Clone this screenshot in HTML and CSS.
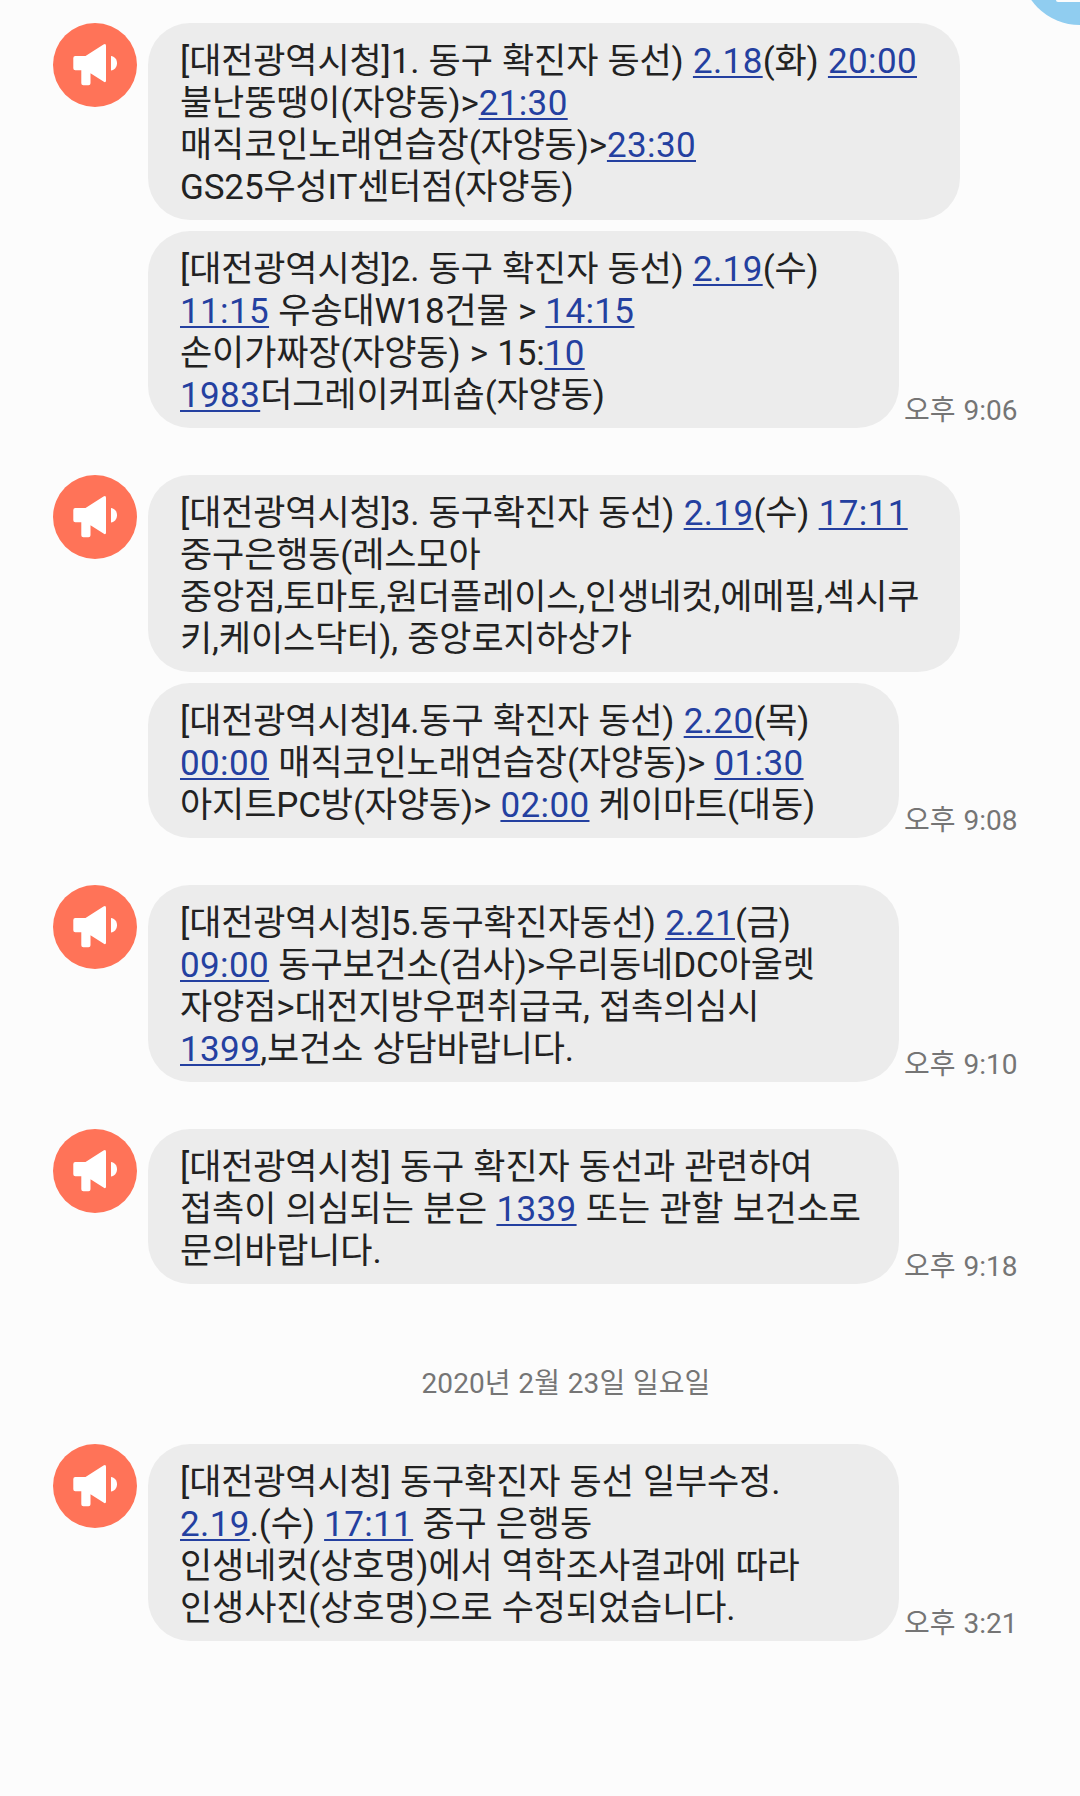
FILE: index.html
```
<!DOCTYPE html>
<html lang="ko">
<head>
    <meta charset="utf-8">
    <title>메시지</title>
    <link rel="stylesheet" href="styles.css">
</head>
<body>
<svg class="symbols" width="0" height="0">
    <symbol id="megaphone" viewBox="0 0 84 84">
        <path d="M20.300 35Q20.300 33 22.300 33H32.500L50.500 21.600Q53 20.200 53 22.800V57.500Q53 60.200 50.500 58.600L37.500 50.300V60.300Q37.500 62.300 35.500 62.300H30.300Q28.300 62.300 28.300 60.300V47.300H22.300Q20.300 47.300 20.300 45.300Z"/>
        <path d="M58 33C61.500 33.300 64 36.500 64 40.200S61.500 47.200 58 47.500Z"/>
    </symbol>
</svg>

<div class="corner_badge"><span></span><i></i></div>

<div class="chat">
    <div class="group">
        <div class="avatar"><svg><use href="#megaphone"/></svg></div>
        <div class="messages">
            <div class="row">
                <div class="bubble wide">[대전광역시청]1. 동구 확진자 동선) <a>2.18</a>(화) <a>20:00</a><br>불난뚱땡이(자양동)&gt;<a>21:30</a><br>매직코인노래연습장(자양동)&gt;<a>23:30</a><br>GS25우성IT센터점(자양동)</div>
            </div>
            <div class="row">
                <div class="bubble">[대전광역시청]2. 동구 확진자 동선) <a>2.19</a>(수)<br><a>11:15</a> 우송대W18건물 &gt; <a>14:15</a><br>손이가짜장(자양동) &gt; 15:<a>10</a><br><a>1983</a>더그레이커피숍(자양동)</div>
                <span class="time">오후 9:06</span>
            </div>
        </div>
    </div>

    <div class="group">
        <div class="avatar"><svg><use href="#megaphone"/></svg></div>
        <div class="messages">
            <div class="row">
                <div class="bubble wide">[대전광역시청]3. 동구확진자 동선) <a>2.19</a>(수) <a>17:11</a><br>중구은행동(레스모아<br>중앙점,토마토,원더플레이스,인생네컷,에메필,섹시쿠<br>키,케이스닥터), 중앙로지하상가</div>
            </div>
            <div class="row">
                <div class="bubble">[대전광역시청]4.동구 확진자 동선) <a>2.20</a>(목)<br><a>00:00</a> 매직코인노래연습장(자양동)&gt; <a>01:30</a><br>아지트PC방(자양동)&gt; <a>02:00</a> 케이마트(대동)</div>
                <span class="time">오후 9:08</span>
            </div>
        </div>
    </div>

    <div class="group">
        <div class="avatar"><svg><use href="#megaphone"/></svg></div>
        <div class="messages">
            <div class="row">
                <div class="bubble">[대전광역시청]5.동구확진자동선) <a>2.21</a>(금)<br><a>09:00</a> 동구보건소(검사)&gt;우리동네DC아울렛<br>자양점&gt;대전지방우편취급국, 접촉의심시<br><a>1399</a>,보건소 상담바랍니다.</div>
                <span class="time">오후 9:10</span>
            </div>
        </div>
    </div>

    <div class="group">
        <div class="avatar"><svg><use href="#megaphone"/></svg></div>
        <div class="messages">
            <div class="row">
                <div class="bubble">[대전광역시청] 동구 확진자 동선과 관련하여<br>접촉이 의심되는 분은 <a>1339</a> 또는 관할 보건소로<br>문의바랍니다.</div>
                <span class="time">오후 9:18</span>
            </div>
        </div>
    </div>

    <div class="date">2020년 2월 23일 일요일</div>

    <div class="group">
        <div class="avatar"><svg><use href="#megaphone"/></svg></div>
        <div class="messages">
            <div class="row">
                <div class="bubble">[대전광역시청] 동구확진자 동선 일부수정.<br><a>2.19</a>.(수) <a>17:11</a> 중구 은행동<br>인생네컷(상호명)에서 역학조사결과에 따라<br>인생사진(상호명)으로 수정되었습니다.</div>
                <span class="time">오후 3:21</span>
            </div>
        </div>
    </div>
</div>
</body>
</html>
```
FILE: styles.css
```
* {box-sizing: border-box;}
body {margin: 0;background: #fcfcfc;color: #222;font-family: Roboto, "Noto Sans CJK KR", sans-serif;overflow-x: hidden;}
.symbols {display: block;}

.chat {width: 1080px;height: 1796px;padding: 23px 0 0 53px;}
.group {display: flex;gap: 11px;margin-bottom: 47px;}
.avatar {width: 84px;height: 84px;border-radius: 50%;background: #ff7358;flex: none;}
.avatar svg {display: block;width: 84px;height: 84px;fill: #fff;}

.messages {display: flex;flex-direction: column;gap: 11px;}
.row {display: flex;align-items: flex-end;gap: 5px;}
.bubble {width: 751px;padding: 18px 0 11px 32px;border-radius: 42px;background: #ececec;font-size: 35px;line-height: 42px;letter-spacing: -0.13px;word-spacing: 0.7px;white-space: nowrap;}
.wide {width: 812px;}
.bubble a {color: #2440a0;letter-spacing: 0.38px;text-decoration: underline;text-decoration-thickness: 2px;text-underline-offset: 3px;}
.time {font-size: 28px;line-height: 34px;word-spacing: 1px;color: #757575;white-space: nowrap;}

.date {margin: 83px 0 43px;width: 1026px;height: 34px;font-size: 28px;line-height: 34px;letter-spacing: 0.1px;word-spacing: 0.6px;text-align: center;color: #757575;}

/* floating button cut off by the screen edge */
.corner_badge {position: absolute;right: 0;top: 0;width: 54px;height: 26px;overflow: hidden;}
.corner_badge span {position: absolute;left: -6px;bottom: 1px;width: 120px;height: 120px;border-radius: 50%;background: #90cdf0;}
.corner_badge i {position: absolute;right: 0;top: 0;width: 24px;height: 2px;background: #fcfcfc;border-bottom-left-radius: 2px;}
```
